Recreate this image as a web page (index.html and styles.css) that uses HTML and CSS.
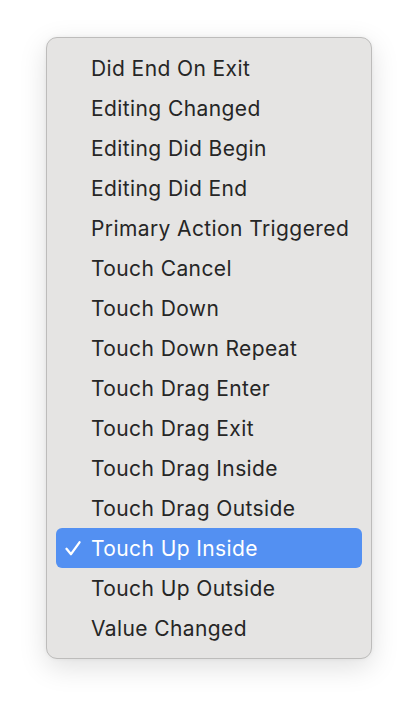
FILE: index.html
```html
<!DOCTYPE html>
<html>
<head>
<meta charset="utf-8">
<link rel="stylesheet" href="styles.css">
</head>
<body>
<div class="menu">
  <div class="item">Did End On Exit</div>
  <div class="item">Editing Changed</div>
  <div class="item">Editing Did Begin</div>
  <div class="item">Editing Did End</div>
  <div class="item">Primary Action Triggered</div>
  <div class="item">Touch Cancel</div>
  <div class="item">Touch Down</div>
  <div class="item">Touch Down Repeat</div>
  <div class="item">Touch Drag Enter</div>
  <div class="item">Touch Drag Exit</div>
  <div class="item">Touch Drag Inside</div>
  <div class="item">Touch Drag Outside</div>
  <div class="item selected"><svg class="check" width="16" height="15" viewBox="0 0 16 15"><polyline points="1.5,7.8 6,13.2 14.5,1.3" fill="none" stroke="#ffffff" stroke-width="2.3" stroke-linecap="round" stroke-linejoin="round"/></svg>Touch Up Inside</div>
  <div class="item">Touch Up Outside</div>
  <div class="item">Value Changed</div>
</div>
</body>
</html>
```
FILE: styles.css
```css
html, body {
  margin: 0;
  padding: 0;
  background: #ffffff;
}
body {
  width: 418px;
  height: 712px;
  padding-top: 37px;
  padding-left: 46px;
  box-sizing: border-box;
  font-family: Inter, "Noto Sans", sans-serif;
}
.menu {
  width: 326px;
  box-sizing: border-box;
  background: #e5e4e3;
  border: 1px solid #bdbcbb;
  border-radius: 11px;
  padding: 10px 9px;
  box-shadow: 0 8px 28px rgba(0,0,0,0.13), 0 0 4px rgba(0,0,0,0.05);
}
.item {
  height: 40px;
  box-sizing: border-box;
  padding-top: 1px;
  line-height: 40px;
  padding-left: 35px;
  font-size: 21px;
  letter-spacing: 0.4px;
  color: #262626;
  border-radius: 6px;
  position: relative;
  white-space: nowrap;
}
.item.selected {
  background: #5390f2;
  color: #ffffff;
}
.check {
  position: absolute;
  left: 9px;
  top: 13px;
}
```
